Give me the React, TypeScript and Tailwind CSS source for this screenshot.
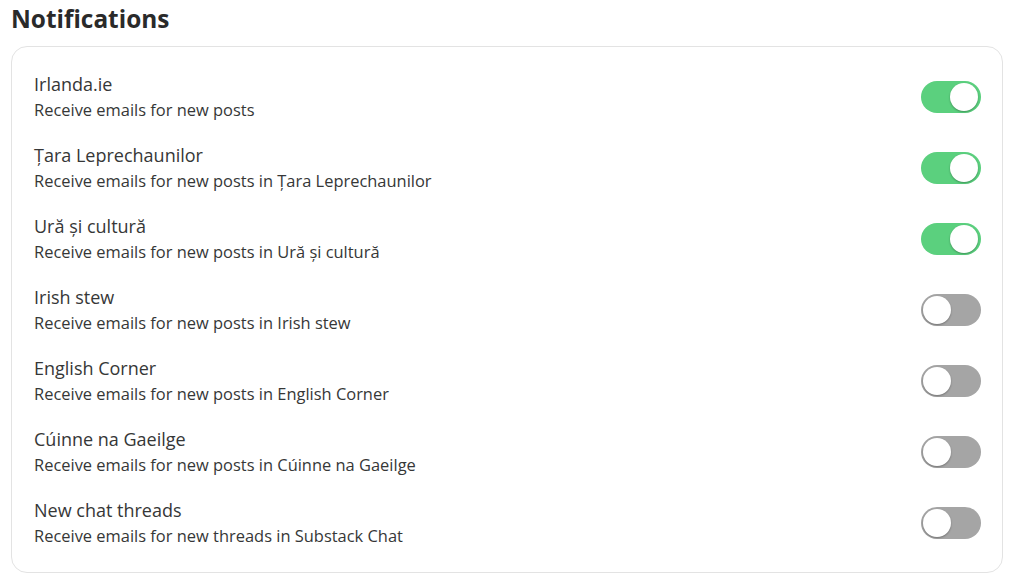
import React from "react";

const rows = [
  { title: "Irlanda.ie", desc: "Receive emails for new posts", on: true },
  { title: "Țara Leprechaunilor", desc: "Receive emails for new posts in Țara Leprechaunilor", on: true },
  { title: "Ură și cultură", desc: "Receive emails for new posts in Ură și cultură", on: true },
  { title: "Irish stew", desc: "Receive emails for new posts in Irish stew", on: false },
  { title: "English Corner", desc: "Receive emails for new posts in English Corner", on: false },
  { title: "Cúinne na Gaeilge", desc: "Receive emails for new posts in Cúinne na Gaeilge", on: false },
  { title: "New chat threads", desc: "Receive emails for new threads in Substack Chat", on: false },
];

function Toggle({ on }: { on: boolean }) {
  return (
    <div
      className={
        on
          ? "relative h-[32px] w-[60px] shrink-0 rounded-full bg-[#5bd07e]"
          : "relative h-[32px] w-[60px] shrink-0 rounded-full bg-[#a5a5a5]"
      }
    >
      <div
        className={
          on
            ? "absolute top-[2px] left-[29px] h-[28px] w-[28px] rounded-full bg-white shadow-[0_1px_2px_rgba(0,0,0,0.3)]"
            : "absolute top-[2px] left-[2px] h-[28px] w-[28px] rounded-full bg-white shadow-[0_1px_2px_rgba(0,0,0,0.3)]"
        }
      />
    </div>
  );
}

export default function App() {
  return (
    <div className="min-h-screen bg-white pl-[11px] pr-[16px] font-['Open_Sans',sans-serif] text-[#363737]">
      <h1 className="h-[46px] pt-[3px] text-[24.4px] leading-[32px] font-bold text-[#2a2a2a]">Notifications</h1>
      <div className="rounded-[16px] border border-[#e3e3e3] pt-[14px] pb-[14px] pl-[22px] pr-[21px]">
        {rows.map((r) => (
          <div key={r.title} className="flex h-[71px] items-center justify-between">
            <div className="flex flex-col">
              <div className="text-[18px] leading-[26px] text-[#363737]">{r.title}</div>
              <div className="text-[16.45px] leading-[26px] text-[#363737]">{r.desc}</div>
            </div>
            <Toggle on={r.on} />
          </div>
        ))}
      </div>
    </div>
  );
}
